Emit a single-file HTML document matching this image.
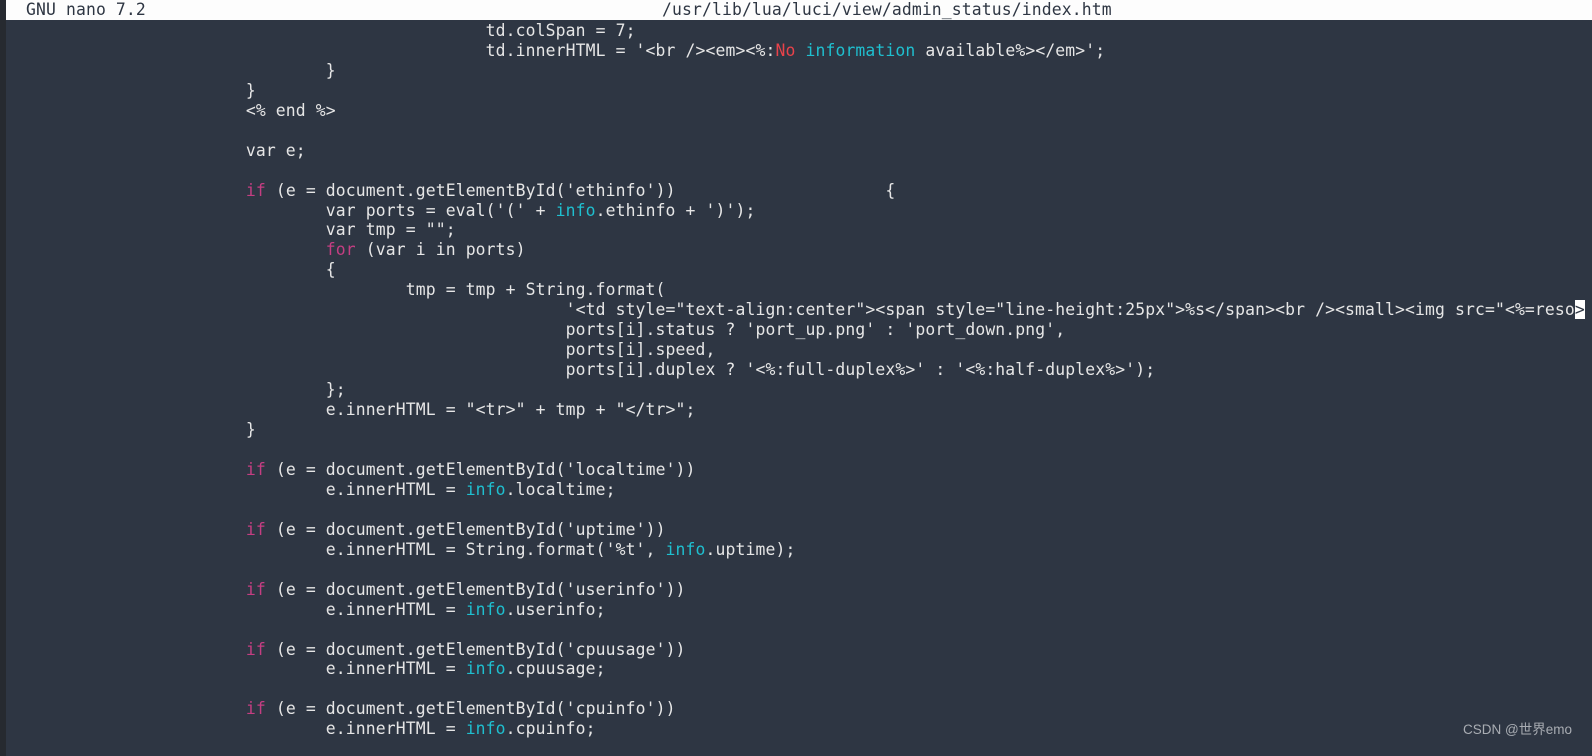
<!DOCTYPE html>
<html><head><meta charset="utf-8"><style>
html,body{margin:0;padding:0;width:1592px;height:756px;overflow:hidden;background:#2e3643;}
.strip{position:absolute;left:0;top:0;width:6px;height:756px;background:#262a30;}
.bar{position:absolute;left:6px;top:0;width:1586px;height:20px;background:#fdfdfd;}
pre{position:absolute;left:6px;top:1px;margin:0;font-family:"DejaVu Sans Mono","Liberation Mono",monospace;font-size:16.4px;letter-spacing:0.125px;line-height:19.95px;color:#e6e6e6;white-space:pre;}
.t{position:absolute;top:0;font-family:"DejaVu Sans Mono","Liberation Mono",monospace;font-size:16.4px;letter-spacing:0.125px;line-height:20px;color:#2e3643;white-space:pre;}
.k{color:#c43e82}.c{color:#1fbfcf}.r{color:#e8424a}
.cur{background:#fff;color:#2e3643;}
.wm{position:absolute;left:1463px;top:718px;font-family:"Liberation Sans","Noto Sans CJK SC",sans-serif;font-size:13.5px;color:#a9adb3;}
</style></head><body>
<div class="strip"></div><div class="bar"></div>
<div class="t" style="left:26px">GNU nano 7.2</div>
<div class="t" style="left:662px">/usr/lib/lua/luci/view/admin_status/index.htm</div>
<pre>

                                                td.colSpan = 7;
                                                td.innerHTML = '&lt;br /&gt;&lt;em&gt;&lt;%:<span class="r">No</span> <span class="c">information</span> available%&gt;&lt;/em&gt;';
                                }
                        }
                        &lt;% end %&gt;

                        var e;

                        <span class="k">if</span> (e = document.getElementById('ethinfo'))                     {
                                var ports = eval('(' + <span class="c">info</span>.ethinfo + ')');
                                var tmp = "";
                                <span class="k">for</span> (var i in ports)
                                {
                                        tmp = tmp + String.format(
                                                        '&lt;td style="text-align:center"&gt;&lt;span style="line-height:25px"&gt;%s&lt;/span&gt;&lt;br /&gt;&lt;small&gt;&lt;img src="&lt;%=reso<span class="cur">&gt;</span>
                                                        ports[i].status ? 'port_up.png' : 'port_down.png',
                                                        ports[i].speed,
                                                        ports[i].duplex ? '&lt;%:full-duplex%&gt;' : '&lt;%:half-duplex%&gt;');
                                };
                                e.innerHTML = "&lt;tr&gt;" + tmp + "&lt;/tr&gt;";
                        }

                        <span class="k">if</span> (e = document.getElementById('localtime'))
                                e.innerHTML = <span class="c">info</span>.localtime;

                        <span class="k">if</span> (e = document.getElementById('uptime'))
                                e.innerHTML = String.format('%t', <span class="c">info</span>.uptime);

                        <span class="k">if</span> (e = document.getElementById('userinfo'))
                                e.innerHTML = <span class="c">info</span>.userinfo;

                        <span class="k">if</span> (e = document.getElementById('cpuusage'))
                                e.innerHTML = <span class="c">info</span>.cpuusage;

                        <span class="k">if</span> (e = document.getElementById('cpuinfo'))
                                e.innerHTML = <span class="c">info</span>.cpuinfo;
</pre>
<div class="wm">CSDN @世界emo</div>
</body></html>
